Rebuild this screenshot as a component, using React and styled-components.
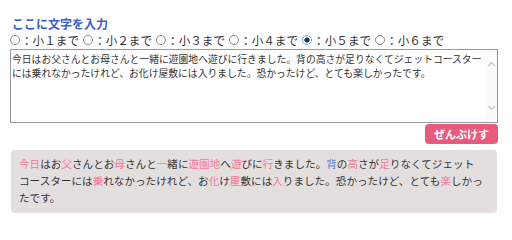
import { useState } from 'react';
import styled, { createGlobalStyle } from 'styled-components';

const GlobalStyle = createGlobalStyle`
  body {
    margin: 0;
    background: #ffffff;
    font-family: "Noto Sans CJK JP", "Noto Sans", sans-serif;
    color: #333333;
  }
`;

const SAMPLE =
  '今日はお父さんとお母さんと一緒に遊園地へ遊びに行きました。背の高さが足りなくてジェットコースターには乗れなかったけれど、お化け屋敷には入りました。恐かったけど、とても楽しかったです。';

const GRADES = ['小１', '小２', '小３', '小４', '小５', '小６'];

const PINK = '今日父母一遊園地行高足乗化屋入楽';
const BLUE = '背';

const Chevron = ({ up }) => (
  <svg width="9" height="6" viewBox="0 0 9 6">
    <path
      d={up ? 'M1 5 L4.5 1.5 L8 5' : 'M1 1 L4.5 4.5 L8 1'}
      fill="none"
      stroke="#c4c4c4"
      strokeWidth="1.1"
    />
  </svg>
);

const App = () => {
  const [text, setText] = useState(SAMPLE);
  const [grade, setGrade] = useState(4);

  return (
    <Page>
      <GlobalStyle />
      <Title>ここに文字を入力</Title>
      <RadioRow>
        {GRADES.map((g, i) => (
          <RadioLabel key={g}>
            <Radio
              type="radio"
              name="grade"
              checked={grade === i}
              onChange={() => setGrade(i)}
            />
            ：{g}まで
          </RadioLabel>
        ))}
      </RadioRow>
      <Field>
        <TextArea value={text} onChange={(e) => setText(e.target.value)} />
        <ScrollBar>
          <Chevron up />
          <Chevron />
        </ScrollBar>
      </Field>
      <ButtonRow>
        <ClearButton onClick={() => setText('')}>ぜんぶけす</ClearButton>
      </ButtonRow>
      <Result lang="ja">
        {[...text].map((ch, i) => (
          <Char
            key={i}
            $tone={PINK.includes(ch) ? 'pink' : BLUE.includes(ch) ? 'blue' : ''}
          >
            {ch}
          </Char>
        ))}
      </Result>
    </Page>
  );
};

export default App;

const Page = styled.div`
  padding: 15px 14px 0 10px;
  display: flex;
  flex-direction: column;
`;

const Title = styled.h2`
  margin: 0 0 0 2px;
  font-size: 12px;
  line-height: 17px;
  font-weight: bold;
  color: #3d62c5;
`;

const RadioRow = styled.div`
  display: flex;
  align-items: center;
  height: 15px;
`;

const RadioLabel = styled.label`
  display: flex;
  align-items: center;
  font-size: 11.6px;
  color: #333;
  margin-right: 4px;
`;

const Radio = styled.input`
  appearance: none;
  margin: 0 1px 0 0;
  width: 10px;
  height: 10px;
  border-radius: 50%;
  border: 1px solid #8a8a8a;
  background: #fff;
  &:checked {
    border-color: #74a6e8;
    background: radial-gradient(circle, #20365e 0 2.4px, #fff 2.8px);
  }
`;

const Field = styled.div`
  position: relative;
  margin-top: 2px;
  width: 488px;
  height: 74px;
`;

const TextArea = styled.textarea`
  display: block;
  box-sizing: border-box;
  width: 100%;
  height: 100%;
  margin: 0;
  padding: 2px 14px 2px 1px;
  border: 1px solid #9a9a9a;
  font-family: "Noto Sans CJK JP", sans-serif;
  font-size: 9.8px;
  line-height: 14px;
  color: #333;
  resize: none;
  overflow: hidden;
  outline: none;
`;

const ScrollBar = styled.div`
  position: absolute;
  top: 1px;
  right: 1px;
  bottom: 1px;
  width: 12px;
  background: #fbfbfb;
  display: flex;
  flex-direction: column;
  justify-content: space-between;
  align-items: center;
  padding: 11px 0 11px;
  box-sizing: border-box;
  pointer-events: none;
`;

const ButtonRow = styled.div`
  display: flex;
  justify-content: flex-end;
  width: 488px;
  margin-top: 1px;
`;

const ClearButton = styled.button`
  width: 73px;
  height: 20px;
  border: 0;
  border-radius: 4px;
  background: #e85b7e;
  color: #fff;
  font-family: "Noto Sans CJK JP", sans-serif;
  font-size: 11px;
  font-weight: bold;
  padding: 0;
`;

const Result = styled.div`
  margin: 6px 0 0 1px;
  width: 486px;
  box-sizing: border-box;
  padding: 5px 14px 7px 8px;
  background: #e4dfdf;
  border-radius: 4px;
  font-size: 10.6px;
  line-height: 17px;
  color: #333;
`;

const Char = styled.span`
  color: ${({ $tone }) =>
    $tone === 'pink' ? '#f27a9a' : $tone === 'blue' ? '#5b7fd8' : 'inherit'};
`;
